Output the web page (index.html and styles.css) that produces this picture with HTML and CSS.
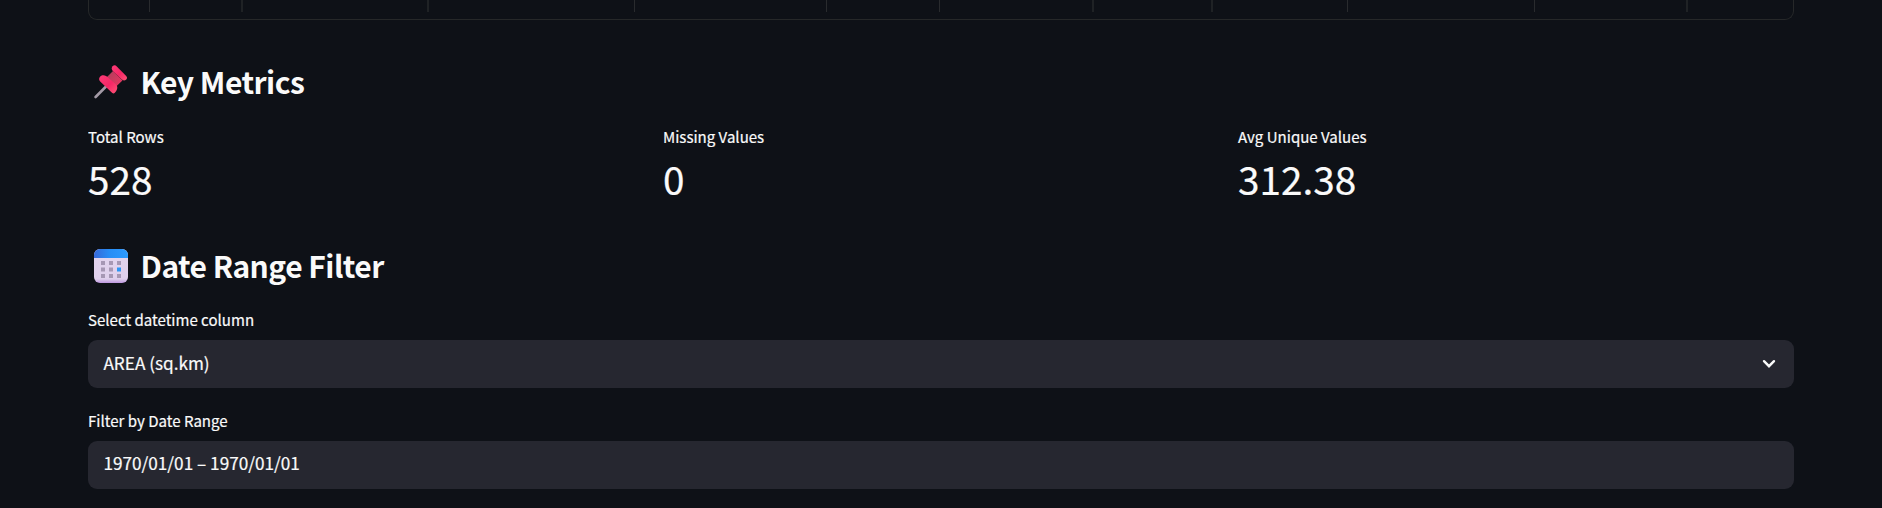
FILE: index.html
```html
<!DOCTYPE html>
<html lang="en">
<head>
<meta charset="utf-8">
<title>Key Metrics</title>
<link rel="stylesheet" href="styles.css">
</head>
<body>
<main class="page">
  <div class="table-end">
    <div class="cell c1"></div><div class="cell wide c2"></div><div class="cell wide c3"></div><div class="cell c4"></div><div class="cell c5"></div><div class="cell c6"></div><div class="cell wide c7"></div><div class="cell wide c8"></div><div class="cell c9"></div><div class="cell c10"></div><div class="cell wide c11"></div>
  </div>
  <h2 class="heading">
    <svg class="emoji" viewBox="0 0 34 34">
      <defs>
        <linearGradient id="pink" x1="0" y1="0" x2="1" y2="1"><stop offset="0" stop-color="#ff3b78"/><stop offset=".55" stop-color="#f52766"/><stop offset="1" stop-color="#ff5577"/></linearGradient>
        <linearGradient id="stem" x1="0" y1="0" x2="1" y2="1"><stop offset="0" stop-color="#a93e5b"/><stop offset="1" stop-color="#f03562"/></linearGradient>
      </defs>
      <path d="M1.600 32 13 20.500" stroke="#a39aa6" stroke-width="2.600" stroke-linecap="round"/>
      <path d="M19 6 11.500 13.500 21 22.500 28.500 15.500Z" fill="url(#stem)"/>
      <path d="M18.600 1.200C20 -.2 21.600 .2 22.800 1.400L32.200 11C33.300 12.200 33.300 13.400 32.300 14.400 31 15.600 29.200 15.800 27.800 14.600L18.800 6C17.400 4.600 17.400 2.500 18.600 1.200Z" fill="url(#pink)"/>
      <path d="M6.200 11.600C8.500 9.200 11.800 10 14.600 13 17.600 16.200 20.500 17.600 22.600 20.200 24.300 22.600 22.600 26 20.800 27.800 19.500 29 18.300 28.200 17.200 27.100L6.200 16.500C4.700 14.900 4.800 13.100 6.200 11.600Z" fill="url(#pink)"/>
    </svg>
    <span>Key Metrics</span>
  </h2>
  <section class="metrics">
    <div class="metric"><div class="label">Total Rows</div><div class="value">528</div></div>
    <div class="metric"><div class="label">Missing Values</div><div class="value">0</div></div>
    <div class="metric"><div class="label">Avg Unique Values</div><div class="value">312.38</div></div>
  </section>
  <h2 class="heading second">
    <svg class="emoji" viewBox="0 0 34 34">
      <defs>
        <linearGradient id="blue"><stop offset="0" stop-color="#3768d8"/><stop offset=".45" stop-color="#288df5"/><stop offset="1" stop-color="#2c9bff"/></linearGradient>
        <linearGradient id="paper" x1="0" y1="0" x2="0" y2="1"><stop offset="0" stop-color="#e2d5ed"/><stop offset=".88" stop-color="#dfd0ec"/><stop offset="1" stop-color="#bd96df"/></linearGradient>
      </defs>
      <rect width="34" height="34" rx="6" fill="url(#paper)"/>
      <path d="M0 9V6a6 6 0 0 1 6-6h22a6 6 0 0 1 6 6v3Z" fill="url(#blue)"/>
      <path d="M7 12h4v4H7zM15 12h4v4h-4zM23 12h4v4h-4zM7 18.500h4v4H7zM15 18.500h4v4h-4zM7 25h4v4H7zM15 25h4v4h-4zM23 25h4v4h-4z" fill="#a698b4"/>
      <path d="M23 18.500h4v4h-4z" fill="#2b96f5"/>
    </svg>
    <span>Date Range Filter</span>
  </h2>
  <div class="label">Select datetime column</div>
  <div class="field">
    <span>AREA (sq.km)</span>
    <svg class="chevron" viewBox="0 0 14 10"><path d="M2 2.200 7 7.200 12 2.200" fill="none" stroke="#fafafa" stroke-width="2.400" stroke-linecap="round"/></svg>
  </div>
  <div class="label lower">Filter by Date Range</div>
  <div class="field date"><span>1970/01/01 – 1970/01/01</span></div>
</main>
</body>
</html>
```
FILE: styles.css
```css
* { box-sizing: border-box; }
body {
  margin: 0;
  background: #0e1117;
  color: #fafafa;
  font-family: "Noto Sans CJK SC", "Noto Sans", sans-serif;
}
.page { width: 1706px; height: 508px; margin-left: 88px; overflow: hidden; }
.table-end {
  display: flex;
  height: 20px;
  border: 1px solid #262829;
  border-top: 0;
  border-radius: 0 0 9px 9px;
}
.cell { flex: none; height: 12px; border-right: 1px solid #292b2e; }
.wide { border-right: 2px solid #1f2225; }
.c1 { width: 61px; }
.c2 { width: 93px; }
.c3 { width: 186px; }
.c4 { width: 206px; }
.c5 { width: 192px; }
.c6 { width: 113px; }
.c7 { width: 154px; }
.c8 { width: 119px; }
.c9 { width: 135px; }
.c10 { width: 187px; }
.c11 { width: 153px; }
.heading {
  display: flex;
  align-items: center;
  gap: 12.5px;
  height: 44px;
  margin: 39px 0 0;
  padding-left: 6px;
  font-size: 30px;
  line-height: 44px;
  font-weight: 700;
  letter-spacing: -0.53px;
  white-space: nowrap;
}
.emoji { width: 34px; height: 34px; margin-top: 1px; }
.metrics { display: grid; grid-template-columns: repeat(3, 1fr); gap: 19px; margin-top: 21px; }
.label {
  height: 25px;
  font-size: 15.05px;
  line-height: 25px;
  white-space: nowrap;
  -webkit-text-stroke: 0.2px #fafafa;
}
.value {
  height: 58px;
  font-size: 38.7px;
  line-height: 58px;
  white-space: nowrap;
  -webkit-text-stroke: 0.2px #fafafa;
}
.heading.second { margin-top: 36px; margin-bottom: 20px; }
.field {
  display: flex;
  align-items: center;
  justify-content: space-between;
  height: 48px;
  margin-top: 8px;
  padding: 0 18px 3px 15.4px;
  border-radius: 9px;
  background: #262730;
  font-size: 17.2px;
  line-height: 25px;
  -webkit-text-stroke: 0.2px #fafafa;
}
.chevron { width: 14px; height: 10px; margin-top: 3px; }
.label.lower { margin-top: 20px; }
.date { padding-bottom: 5px; }
```
